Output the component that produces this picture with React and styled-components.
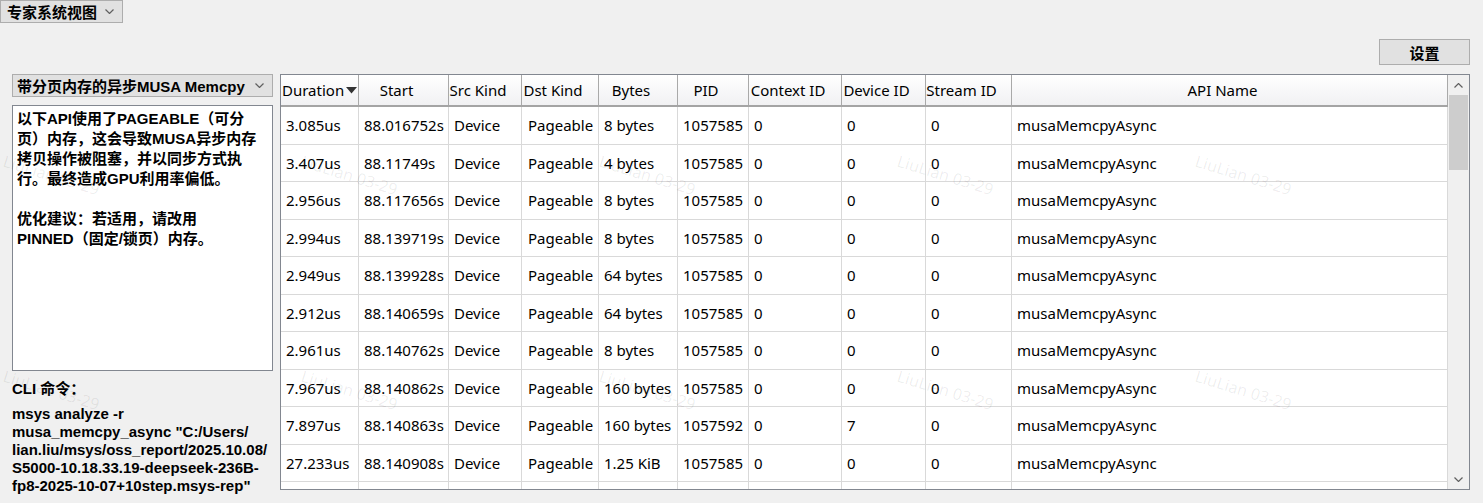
import React from 'react';
import styled, { createGlobalStyle } from 'styled-components';

const GlobalStyle = createGlobalStyle`
	html, body {
		margin: 0;
		padding: 0;
		background: #f0f0f0;
	}
	body {
		font-family: 'Noto Sans', 'Noto Sans CJK SC', sans-serif;
		color: #000;
	}
`;

const CJK_BOLD = `'Liberation Sans', 'Noto Sans CJK SC', sans-serif`;

const Page = styled.div`
	position: relative;
	width: 1483px;
	height: 503px;
	overflow: hidden;
	background: #f0f0f0;
`;

const Combo = styled.div`
	box-sizing: border-box;
	display: flex;
	align-items: center;
	justify-content: space-between;
	width: ${props => props.width}px;
	height: 23px;
	padding: 0 8px 0 ${props => props.padLeft}px;
	background: #e1e1e1;
	border: 1px solid #adadad;
	font-family: ${CJK_BOLD};
	font-weight: bold;
	font-size: 15px;
	white-space: nowrap;
`;

const SettingsRow = styled.div`
	display: flex;
	justify-content: flex-end;
	padding: 16px 13px 0 0;
`;

const Button = styled.button`
	box-sizing: border-box;
	width: 91px;
	height: 26px;
	margin: 0;
	padding: 0;
	background: #e1e1e1;
	border: 1px solid #adadad;
	font-family: ${CJK_BOLD};
	font-weight: bold;
	font-size: 15px;
	color: #000;
`;

const Main = styled.div`
	display: flex;
	gap: 7px;
	margin-top: 9px;
	padding-left: 12px;
`;

const Sidebar = styled.div`
	display: flex;
	flex-direction: column;
	width: 261px;
`;

const InfoBox = styled.div`
	box-sizing: border-box;
	height: 266px;
	margin-top: 8px;
	padding: 3px 4px;
	background: #fff;
	border: 1px solid #828790;
	font-family: ${CJK_BOLD};
	font-weight: bold;
	font-size: 15px;
	line-height: 20px;
`;

const Line = styled.div`
	white-space: nowrap;
	min-height: ${props => props.lh || 20}px;
`;

const Cli = styled.div`
	margin-top: 9px;
	font-family: ${CJK_BOLD};
	font-weight: bold;
	font-size: 15px;
	line-height: 18px;
`;

const CliCommand = styled.div`
	margin-top: 7px;
`;

const Table = styled.div`
	box-sizing: border-box;
	display: flex;
	width: 1190px;
	height: 416px;
	background: #fff;
	border: 1px solid #828790;
`;

const GridArea = styled.div`
	width: 1167px;
	overflow: hidden;
`;

const COLS = [78, 90, 73, 77, 79, 71, 93, 84, 86, 436];

const RowGrid = styled.div`
	display: grid;
	grid-template-columns: ${COLS.map(c => c + 'px').join(' ')};
`;

const HeaderRow = styled(RowGrid)`
	height: 32px;
	box-sizing: border-box;
	background: linear-gradient(#ffffff, #f1f1f3);
	border-bottom: 2px solid #a4a4a4;
`;

const HeadCell = styled.div`
	box-sizing: border-box;
	display: flex;
	align-items: center;
	justify-content: ${props => (props.left ? 'flex-start' : 'center')};
	gap: 2px;
	padding: ${props => (props.left ? '0 0 0 1px' : '0 14px 0 0')};
	border-right: 1px solid #a9a9a9;
	font-size: 15px;
	white-space: nowrap;
	overflow: hidden;
`;

const SortArrow = styled.svg`
	width: 11px;
	height: 7px;
	flex: none;
`;

const BodyRow = styled(RowGrid)`
	height: 37.5px;
`;

const Cell = styled.div`
	box-sizing: border-box;
	display: flex;
	align-items: center;
	padding-left: ${props => props.pad || 5}px;
	border-right: 1px solid #d9d9d9;
	border-bottom: 1px solid #d9d9d9;
	font-size: 15px;
	white-space: nowrap;
	overflow: hidden;
`;

const Scrollbar = styled.div`
	display: flex;
	flex-direction: column;
	width: 21px;
	background: #f0f0f0;
`;

const ScrollButton = styled.div`
	display: flex;
	align-items: center;
	justify-content: center;
	height: 20px;
	flex: none;
`;

const Thumb = styled.div`
	height: 75px;
	margin: 0 1px;
	background: #cdcdcd;
`;

const Track = styled.div`
	flex: 1;
`;

const Watermark = styled.div`
	position: absolute;
	left: ${props => props.x}px;
	top: ${props => props.y}px;
	transform: rotate(17deg);
	transform-origin: left top;
	font-family: 'Noto Sans', sans-serif;
	font-size: 16px;
	color: rgba(0, 0, 0, 0.07);
	white-space: nowrap;
	pointer-events: none;
`;

const Chevron = ({ up }) => (
	<svg width="9" height="5" viewBox="0 0 9 5">
		<polyline
			points={up ? '0.5,4.5 4.5,0.5 8.5,4.5' : '0.5,0.5 4.5,4.5 8.5,0.5'}
			fill="none"
			stroke="#606060"
			strokeWidth="1.2"
		/>
	</svg>
);

const headers = [
	'Duration',
	'Start',
	'Src Kind',
	'Dst Kind',
	'Bytes',
	'PID',
	'Context ID',
	'Device ID',
	'Stream ID',
	'API Name',
];

const rows = [
	['3.085us', '88.016752s', '8 bytes', '1057585', '0'],
	['3.407us', '88.11749s', '4 bytes', '1057585', '0'],
	['2.956us', '88.117656s', '8 bytes', '1057585', '0'],
	['2.994us', '88.139719s', '8 bytes', '1057585', '0'],
	['2.949us', '88.139928s', '64 bytes', '1057585', '0'],
	['2.912us', '88.140659s', '64 bytes', '1057585', '0'],
	['2.961us', '88.140762s', '8 bytes', '1057585', '0'],
	['7.967us', '88.140862s', '160 bytes', '1057585', '0'],
	['7.897us', '88.140863s', '160 bytes', '1057592', '7'],
	['27.233us', '88.140908s', '1.25 KiB', '1057585', '0'],
];

const watermarks = [];
[150, 365].forEach(y => {
	for (let i = 0; i < 5; i++) {
		watermarks.push({ x: 7 + Math.round(i * 298), y });
	}
});

export default function App() {
	return (
		<Page>
			<GlobalStyle />
			<Combo width={123} padLeft={6}>
				<span>专家系统视图</span>
				<Chevron />
			</Combo>

			<SettingsRow>
				<Button>设置</Button>
			</SettingsRow>

			<Main>
				<Sidebar>
					<Combo width={261} padLeft={4}>
						<span>带分页内存的异步MUSA Memcpy</span>
						<Chevron />
					</Combo>
					<InfoBox>
						<Line>以下API使用了PAGEABLE（可分</Line>
						<Line>页）内存，这会导致MUSA异步内存</Line>
						<Line>拷贝操作被阻塞，并以同步方式执</Line>
						<Line>行。最终造成GPU利用率偏低。</Line>
						<Line />
						<Line>优化建议：若适用，请改用</Line>
						<Line>PINNED（固定/锁页）内存。</Line>
					</InfoBox>
					<Cli>
						<Line lh={18}>CLI 命令：</Line>
						<CliCommand>
							<Line lh={18}>msys analyze -r</Line>
							<Line lh={18}>musa_memcpy_async "C:/Users/</Line>
							<Line lh={18}>lian.liu/msys/oss_report/2025.10.08/</Line>
							<Line lh={18}>S5000-10.18.33.19-deepseek-236B-</Line>
							<Line lh={18}>fp8-2025-10-07+10step.msys-rep"</Line>
						</CliCommand>
					</Cli>
				</Sidebar>

				<Table>
					<GridArea>
						<HeaderRow>
							{headers.map((h, i) => (
								<HeadCell key={h} left={i === 0}>
									{h}
									{i === 0 && (
										<SortArrow viewBox="0 0 11 7">
											<polygon points="0,0 11,0 5.5,6.5" fill="#333" />
										</SortArrow>
									)}
								</HeadCell>
							))}
						</HeaderRow>
						{rows.map(r => (
							<BodyRow key={r[1]}>
								<Cell>{r[0]}</Cell>
								<Cell>{r[1]}</Cell>
								<Cell>Device</Cell>
								<Cell pad={6}>Pageable</Cell>
								<Cell>{r[2]}</Cell>
								<Cell>{r[3]}</Cell>
								<Cell>0</Cell>
								<Cell>{r[4]}</Cell>
								<Cell>0</Cell>
								<Cell>musaMemcpyAsync</Cell>
							</BodyRow>
						))}
						<BodyRow>
							{COLS.map((c, i) => (
								<Cell key={i} />
							))}
						</BodyRow>
					</GridArea>
					<Scrollbar>
						<ScrollButton>
							<Chevron up />
						</ScrollButton>
						<Thumb />
						<Track />
						<ScrollButton>
							<Chevron />
						</ScrollButton>
					</Scrollbar>
				</Table>
			</Main>

			{watermarks.map((w, i) => (
				<Watermark key={i} x={w.x} y={w.y}>
					LiuLian 03-29
				</Watermark>
			))}
		</Page>
	);
}
